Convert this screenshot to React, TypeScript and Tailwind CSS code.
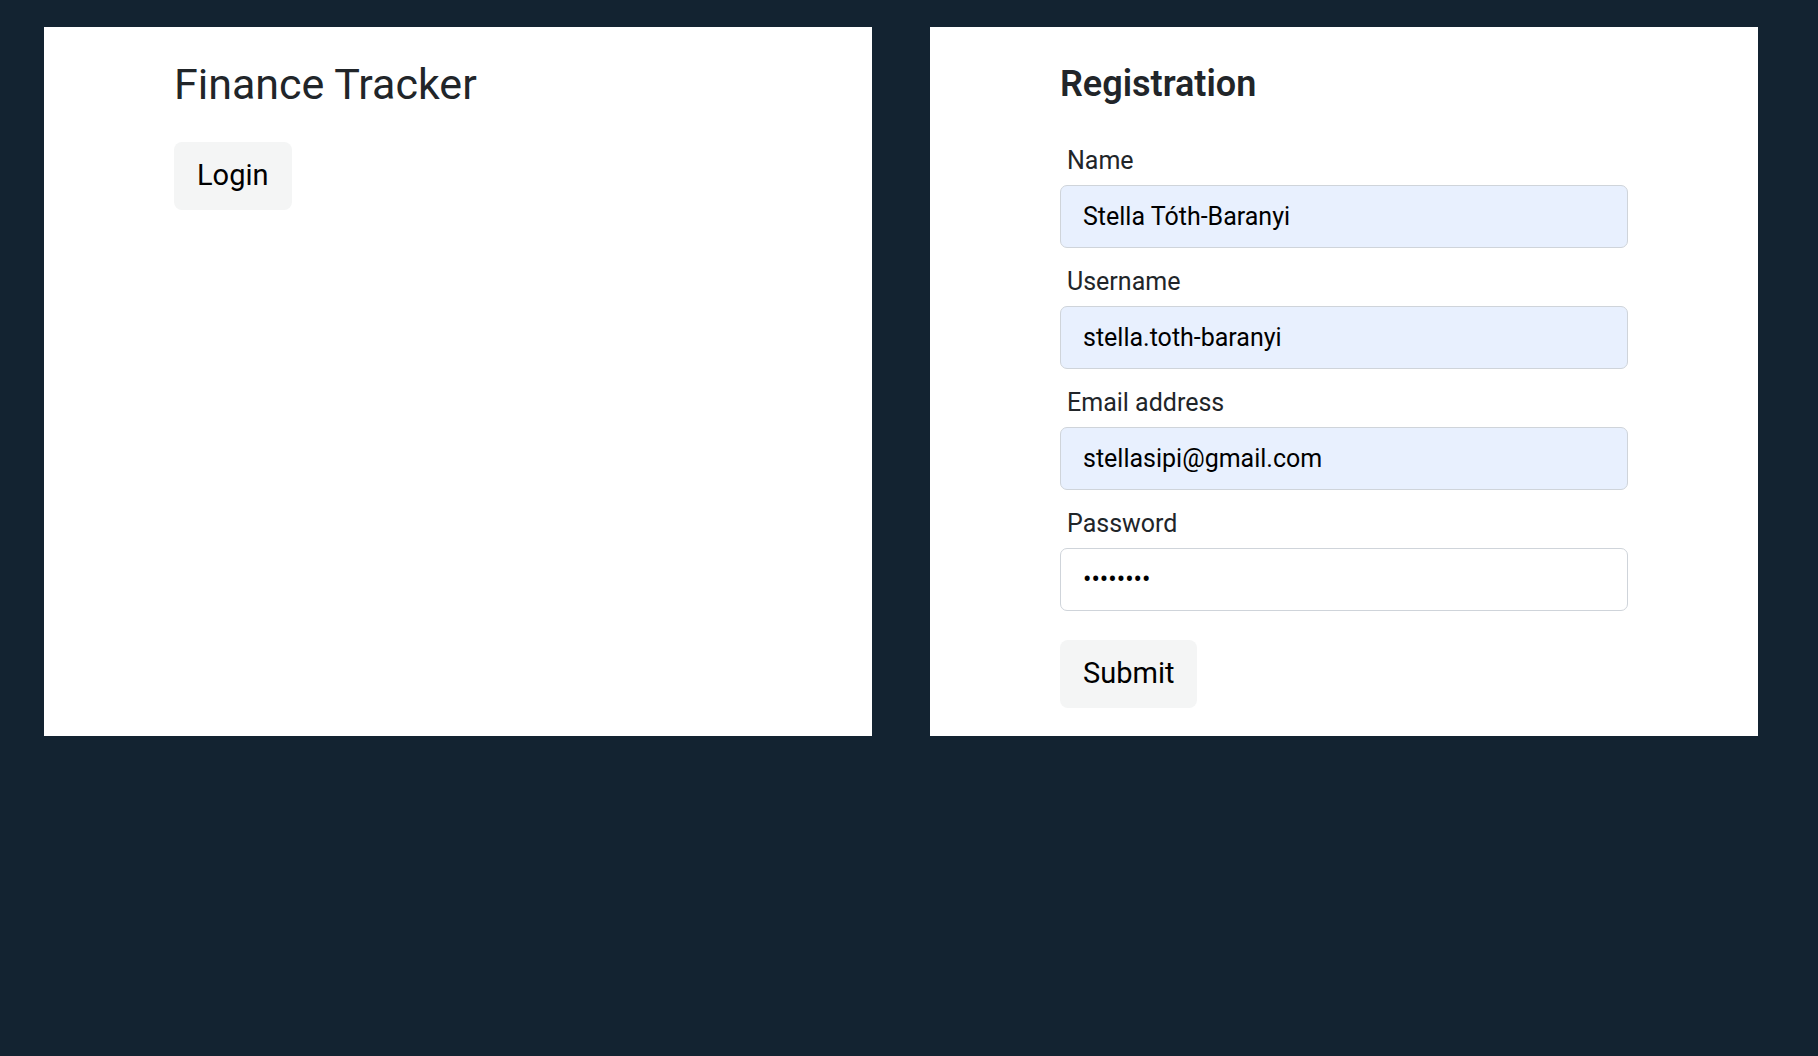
import React from "react";

const fields = [
  { label: "Name", value: "Stella Tóth-Baranyi", type: "text", filled: true },
  { label: "Username", value: "stella.toth-baranyi", type: "text", filled: true },
  { label: "Email address", value: "stellasipi@gmail.com", type: "email", filled: true },
  { label: "Password", value: "secret12", type: "password", filled: false },
];

function Field({ label, value, type, filled }: { label: string; value: string; type: string; filled: boolean }) {
  return (
    <div className="mb-[17px] flex flex-col">
      <label className="mb-[8px] h-[33px] pl-[7px] text-[25px] leading-[33px] text-[#212529]">{label}</label>
      <input
        type={type}
        defaultValue={value}
        readOnly
        className={`h-[63px] w-full rounded-[7px] border border-[#cfd4da] px-[22px] text-[25px] text-black outline-none ${
          filled ? "bg-[#e8f0fe]" : "bg-white"
        }`}
      />
    </div>
  );
}

export default function App() {
  return (
    <div className="min-h-[1056px] w-full bg-[#132331] pt-[27px] pl-[44px] pr-[60px] font-['Roboto',sans-serif]">
      <div className="grid grid-cols-[828px_828px] gap-[58px]">
        <div className="h-[709px] bg-white">
          <div className="mx-auto w-[568px] pt-[30px]">
            <h1 className="text-[43px] leading-[54px] text-[#212529]">Finance Tracker</h1>
            <button className="mt-[31px] h-[68px] rounded-[8px] bg-[#f4f5f5] px-[23px] text-[29px] text-black">
              Login
            </button>
          </div>
        </div>
        <div className="h-[709px] bg-white">
          <div className="mx-auto w-[568px] pt-[37px]">
            <h3 className="mb-[39px] text-[36px] font-semibold leading-[41px] text-[#212529]">Registration</h3>
            <form onSubmit={(e) => e.preventDefault()}>
              {fields.map((f) => (
                <Field key={f.label} {...f} />
              ))}
              <button type="submit" className="mt-[12px] h-[68px] rounded-[8px] bg-[#f4f5f5] px-[23px] text-[29px] text-black">
                Submit
              </button>
            </form>
          </div>
        </div>
      </div>
    </div>
  );
}
